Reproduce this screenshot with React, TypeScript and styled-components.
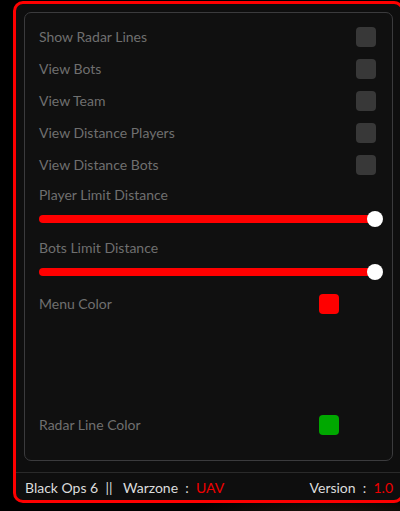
import React from "react";
import styled, { createGlobalStyle } from "styled-components";

const Global = createGlobalStyle`
  html, body { margin: 0; padding: 0; }
  body {
    background: radial-gradient(ellipse 160px 40px at 330px 530px, #2a1e12 0%, #000 100%);
    background-color: #000;
    height: 511px;
    overflow: hidden;
    font-family: Lato, "Open Sans", "Liberation Sans", sans-serif;
  }
`;

const Window = styled.div`
  box-sizing: border-box;
  margin: 1px 0 0 13px;
  width: 391px;
  height: 502px;
  border: 3px solid #ff0000;
  border-radius: 10px;
  background: #0e0e0e;
  display: flex;
  flex-direction: column;
  padding: 8px 0 0 0;
`;

const Panel = styled.div`
  box-sizing: border-box;
  margin: 0 8px;
  height: 449px;
  border: 1px solid #3b3b3d;
  border-radius: 7px;
  background: #101010;
  padding: 8px 16px 0 14px;
  display: flex;
  flex-direction: column;
`;

const Row = styled.div<{ $padRight?: number; $mt?: number }>`
  height: 32px;
  display: flex;
  align-items: center;
  justify-content: space-between;
  padding-right: ${(p) => p.$padRight ?? 0}px;
  margin-top: ${(p) => p.$mt ?? 0}px;
`;

const Label = styled.span`
  color: #6f6f6f;
  font-size: 14px;
  line-height: 20px;
`;

const Check = styled.div`
  width: 20px;
  height: 20px;
  border-radius: 4px;
  background: #383838;
`;

const Swatch = styled.div<{ $color: string }>`
  width: 20px;
  height: 20px;
  border-radius: 4px;
  background: ${(p) => p.$color};
`;

const SliderBlock = styled.div<{ $mt?: number }>`
  display: flex;
  flex-direction: column;
  margin-top: ${(p) => p.$mt ?? 0}px;
`;

const TrackWrap = styled.div`
  position: relative;
  height: 16px;
  margin-top: 6px;
  margin-right: 1px;
  display: flex;
  align-items: center;
`;

const Track = styled.div`
  width: 100%;
  height: 8px;
  border-radius: 4px;
  background: #ff0000;
`;

const Thumb = styled.div`
  position: absolute;
  right: -8px;
  top: 0;
  width: 16px;
  height: 16px;
  border-radius: 50%;
  background: #ffffff;
`;

const Footer = styled.div`
  margin-top: 11px;
  border-top: 1px solid #2a2a2a;
  flex: 1;
  display: flex;
  align-items: center;
  justify-content: space-between;
  padding: 2px 8px 0 9px;
  font-size: 14px;
  color: #dcdcdc;
`;

const FooterGroup = styled.div`
  display: flex;
  align-items: center;
  white-space: pre;
`;

const Red = styled.span`
  color: #ee0000;
`;

const toggles = [
  "Show Radar Lines",
  "View Bots",
  "View Team",
  "View Distance Players",
  "View Distance Bots",
];

const sliders = ["Player Limit Distance", "Bots Limit Distance"];

export default function App() {
  return (
    <>
      <Global />
      <Window>
        <Panel>
          {toggles.map((t) => (
            <Row key={t}>
              <Label>{t}</Label>
              <Check />
            </Row>
          ))}
          {sliders.map((s, i) => (
            <SliderBlock key={s} $mt={i === 0 ? 4 : 11}>
              <Label>{s}</Label>
              <TrackWrap>
                <Track />
                <Thumb />
              </TrackWrap>
            </SliderBlock>
          ))}
          <Row $padRight={37} $mt={8}>
            <Label>Menu Color</Label>
            <Swatch $color="#ff0000" />
          </Row>
          <Row $padRight={37} $mt={89}>
            <Label>Radar Line Color</Label>
            <Swatch $color="#00a800" />
          </Row>
        </Panel>
        <Footer>
          <FooterGroup>
            {"Black Ops 6  ||   Warzone  :  "}
            <Red>UAV</Red>
          </FooterGroup>
          <FooterGroup>
            {"Version  :  "}
            <Red>1.0</Red>
          </FooterGroup>
        </Footer>
      </Window>
    </>
  );
}
